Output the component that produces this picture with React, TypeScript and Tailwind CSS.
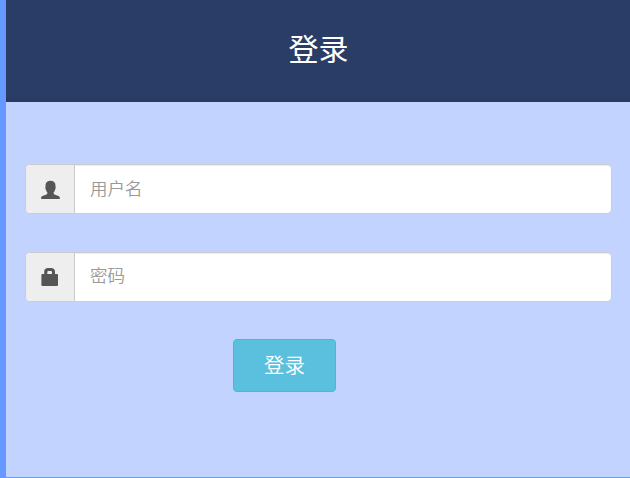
import React from "react";

function UserIcon() {
  return (
    <svg width="20" height="20" viewBox="0 0 20 20" fill="#555" aria-hidden="true">
      <path d="M9.500 .8C6.400 .8 4.500 2.600 4.500 5.500v1.500c-.4.9-.2 1.700.3 2.200.3 1.400.7 2.400 1.500 3.100v1.200c0 .5-.3.8-.8 1L1.500 16C.6 16.400.2 17 .2 17.800v1.200H18.800v-1.200c0-.8-.4-1.400-1.300-1.800L13.500 14.500c-.5-.2-.8-.5-.8-1V12.300c.8-.7 1.200-1.700 1.500-3.100.5-.5.7-1.300.3-2.200V5.500C14.500 2.600 12.600 .8 9.500 .8z" />
    </svg>
  );
}

function LockIcon() {
  return (
    <svg width="20" height="20" viewBox="0 0 20 20" fill="#555" aria-hidden="true">
      <path
        fillRule="evenodd"
        d="M3.200 7V4.700C3.200 2.300 4.900 1 7 1H10.200C12.300 1 14 2.300 14 4.700V7h2.100c.5 0 .9.4.9.900v10.200c0 .5-.4.900-.9.900H1.300c-.5 0-.9-.4-.9-.9V7.900C.4 7.400.8 7 1.300 7zM6.300 7h4.700V5.300c0-.8-.5-1.300-1.300-1.300H7.600C6.800 4 6.300 4.500 6.300 5.300z"
      />
    </svg>
  );
}

type FieldProps = {
  icon: React.ReactNode;
  label: string;
  type: string;
  iconClass: string;
  inputClass: string;
};

function Field({ icon, label, type, iconClass, inputClass }: FieldProps) {
  return (
    <div className="flex h-[50px] w-[587px] overflow-hidden rounded-[5px] border border-[#ccc] bg-white">
      <span className={`flex w-[49px] shrink-0 items-center border-r border-[#ccc] bg-[#eee] pl-[15px] ${iconClass}`}>
        {icon}
      </span>
      <input
        type={type}
        placeholder={label}
        aria-label={label}
        className={`min-w-0 flex-1 pl-[15px] text-[17.5px] font-[350] text-[#555] shadow-[inset_0_1px_1px_rgba(0,0,0,0.075)] outline-none placeholder:text-[#999] ${inputClass}`}
      />
    </div>
  );
}

export default function App() {
  return (
    <div className="flex h-[478px] w-[630px] flex-col overflow-hidden border-b border-l-[6px] border-[#6699ff] bg-[#c2d3ff] font-['Noto_Sans_CJK_SC',sans-serif]">
      <header className="flex h-[102px] shrink-0 items-center justify-center border-b-4 border-[#293961] bg-[#2a3d66] pb-[4px] pl-px">
        <h1 className="text-[30px] leading-[44px] text-white">登录</h1>
      </header>
      <form className="flex flex-col pl-[19px] pt-[62px]" onSubmit={(e) => e.preventDefault()}>
        <Field icon={<UserIcon />} label="用户名" type="text" iconClass="pt-px" inputClass="pb-px" />
        <div className="mt-[38px]">
          <Field icon={<LockIcon />} label="密码" type="password" iconClass="pt-0" inputClass="pb-[3px]" />
        </div>
        <button
          type="submit"
          className="ml-[208px] mt-[37px] h-[53px] w-[103px] rounded-[4px] border border-[#46b8da] bg-[#5bc0de] pb-[3px] text-[20.5px] font-[350] leading-[30px] text-white"
        >
          登录
        </button>
      </form>
    </div>
  );
}
